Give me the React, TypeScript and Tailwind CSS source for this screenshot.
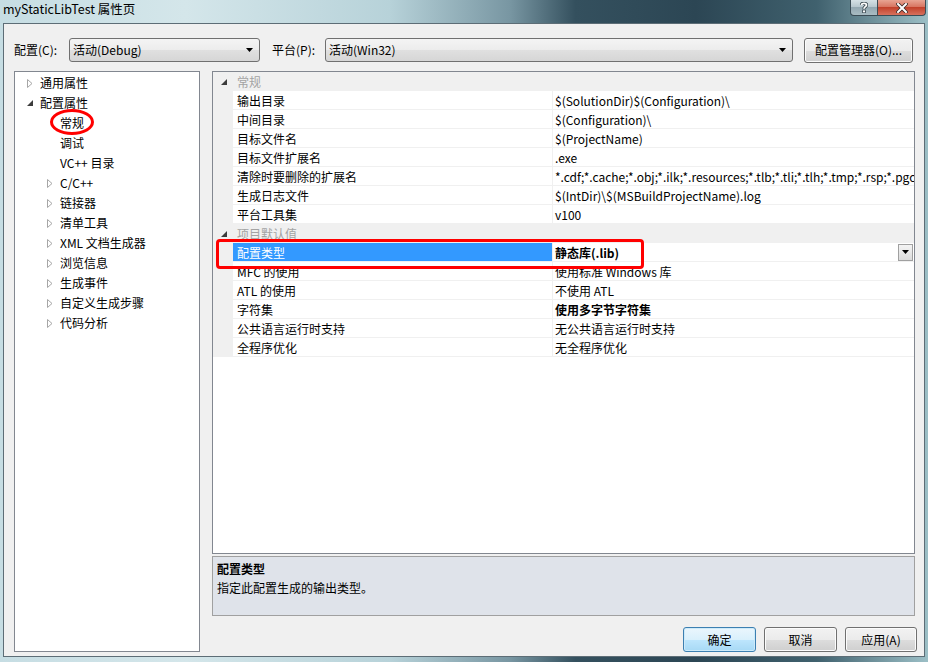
import React from 'react';

type Prop = {
  name: string;
  value: string;
  bold?: boolean;
  selected?: boolean;
};

const general: Prop[] = [
  { name: '输出目录', value: '$(SolutionDir)$(Configuration)\\' },
  { name: '中间目录', value: '$(Configuration)\\' },
  { name: '目标文件名', value: '$(ProjectName)' },
  { name: '目标文件扩展名', value: '.exe' },
  {
    name: '清除时要删除的扩展名',
    value: '*.cdf;*.cache;*.obj;*.ilk;*.resources;*.tlb;*.tli;*.tlh;*.tmp;*.rsp;*.pgc;*.pgd;*.meta;*.tlog;*.manifest;*.res;*.pch;*.exp;*.idb;*.rep;*.xdc;*.pdb;*_manifest.rc;*.bsc;*.sbr;*.xml;*.metagen;*.bi',
  },
  { name: '生成日志文件', value: '$(IntDir)\\$(MSBuildProjectName).log' },
  { name: '平台工具集', value: 'v100' },
];

const defaults: Prop[] = [
  { name: '配置类型', value: '静态库(.lib)', bold: true, selected: true },
  { name: 'MFC 的使用', value: '使用标准 Windows 库' },
  { name: 'ATL 的使用', value: '不使用 ATL' },
  { name: '字符集', value: '使用多字节字符集', bold: true },
  { name: '公共语言运行时支持', value: '无公共语言运行时支持' },
  { name: '全程序优化', value: '无全程序优化' },
];

type TreeNode = { label: string; level: 0 | 1; expander?: 'closed' | 'open' };

const tree: TreeNode[] = [
  { label: '通用属性', level: 0, expander: 'closed' },
  { label: '配置属性', level: 0, expander: 'open' },
  { label: '常规', level: 1 },
  { label: '调试', level: 1 },
  { label: 'VC++ 目录', level: 1 },
  { label: 'C/C++', level: 1, expander: 'closed' },
  { label: '链接器', level: 1, expander: 'closed' },
  { label: '清单工具', level: 1, expander: 'closed' },
  { label: 'XML 文档生成器', level: 1, expander: 'closed' },
  { label: '浏览信息', level: 1, expander: 'closed' },
  { label: '生成事件', level: 1, expander: 'closed' },
  { label: '自定义生成步骤', level: 1, expander: 'closed' },
  { label: '代码分析', level: 1, expander: 'closed' },
];

const ClosedArrow = () => (
  <svg width="6" height="9" viewBox="0 0 6 9">
    <path d="M0.5 0.5 L5 4.5 L0.5 8.5 Z" fill="#fff" stroke="#a6a6a6" strokeWidth="1" />
  </svg>
);

const OpenArrow = () => (
  <svg width="6" height="6" viewBox="0 0 6 6">
    <path d="M6 0 L6 6 L0 6 Z" fill="#3c3c3c" />
  </svg>
);

const DownArrow = () => (
  <svg width="7" height="4" viewBox="0 0 7 4">
    <path d="M0 0 H7 L3.5 4 Z" fill="#000" />
  </svg>
);

const Combo = ({ text, className }: { text: string; className: string }) => (
  <div
    className={`flex h-[24px] items-center justify-between rounded-[3px] border border-[#707070] bg-[linear-gradient(#f4f4f4,#ececec_50%,#e0e0e0_50%,#d6d6d6)] pl-[3px] pr-[6px] ${className}`}
  >
    <span>{text}</span>
    <DownArrow />
  </div>
);

const Button = ({ label, primary, className }: { label: string; primary?: boolean; className: string }) => (
  <div
    className={`flex h-[25px] items-center justify-center rounded-[3px] border ${
      primary
        ? 'border-[#3c7fb1] bg-[linear-gradient(#eaf6fd,#d9f0fc_50%,#bee6fd_50%,#a7d9f5)] shadow-[inset_0_0_0_1px_#cdeaf9]'
        : 'border-[#707070] bg-[linear-gradient(#f2f2f2,#ebebeb_50%,#dddddd_50%,#cfcfcf)] shadow-[inset_0_0_0_1px_#fcfcfc]'
    } ${className}`}
  >
    {label}
  </div>
);

const CategoryRow = ({ title }: { title: string }) => (
  <div className="flex h-[19px] items-center bg-[#f0f0f0]">
    <div className="flex w-[20px] justify-center pl-[1px]">
      <OpenArrow />
    </div>
    <span className="pl-[4px] pt-[1px] text-[#a3a3a3]">{title}</span>
  </div>
);

const PropRow = ({ p }: { p: Prop }) => (
  <div className="flex h-[19px]">
    <div className="w-[20px] shrink-0 bg-[#f0f0f0]" />
    <div
      className={`flex w-[319px] shrink-0 items-center border-b border-[#f0f0f0] pl-[4px] pt-[1px] ${
        p.selected ? 'bg-[#3399ff] text-white' : 'bg-white'
      }`}
    >
      {p.name}
    </div>
    <div className="flex min-w-0 flex-1 items-center justify-between overflow-hidden border-b border-l border-[#f0f0f0] bg-white pl-[2px]">
      <span className={`whitespace-nowrap pt-[1px] ${p.bold ? 'font-bold' : ''}`}>{p.value}</span>
      {p.selected && (
        <div className="mr-[1px] flex h-[17px] w-[15px] shrink-0 items-center justify-center border border-[#a0a0a0] bg-[linear-gradient(#f4f4f4,#dcdcdc)]">
          <DownArrow />
        </div>
      )}
    </div>
  </div>
);

export default function App() {
  return (
    <div className="relative flex h-[662px] w-[928px] flex-col overflow-hidden bg-[linear-gradient(90deg,#c6dde3_0%,#d4e6ea_20%,#b7d2d9_42%,#7896a2_55%,#34505e_62%,#2c4654_75%,#40616e_88%,#9cbfc6_100%)] font-['Noto_Sans_CJK_SC',sans-serif] text-[12px] leading-none text-black">
      {/* title bar */}
      <div className="flex h-[23px] shrink-0 items-center pl-[3px] pb-[4px] text-[12.5px]">
        myStaticLibTest 属性页
      </div>

      {/* caption buttons */}
      <div className="absolute right-[2px] top-0 flex h-[16px]">
        <div className="flex w-[28px] items-center justify-center rounded-bl-[4px] border border-t-0 border-[#3b4c55] bg-[linear-gradient(#d6e1e5,#b5c5cc_50%,#94a8b1_50%,#a9bcc3)]">
          <svg width="8" height="11" viewBox="0 0 8 11">
            <path
              d="M1.5 3 C1.5 0.8 6.5 0.8 6.5 3 C6.5 4.6 4 4.8 4 6.8"
              fill="none"
              stroke="#34444c"
              strokeWidth="3.4"
            />
            <path
              d="M1.5 3 C1.5 0.8 6.5 0.8 6.5 3 C6.5 4.6 4 4.8 4 6.8"
              fill="none"
              stroke="#fff"
              strokeWidth="1.8"
            />
            <rect x="2.6" y="8" width="2.8" height="2.8" fill="#fff" stroke="#34444c" strokeWidth="0.8" />
          </svg>
        </div>
        <div className="flex w-[48px] items-center justify-center rounded-br-[4px] border border-l-0 border-t-0 border-[#3b4c55] bg-[linear-gradient(#e8a493,#d6705c_50%,#c2412b_50%,#d7715d)]">
          <svg width="12" height="10" viewBox="0 0 12 10">
            <path d="M2 1 L10 9 M10 1 L2 9" stroke="#3a2a28" strokeWidth="3.6" strokeLinecap="square" />
            <path d="M2 1 L10 9 M10 1 L2 9" stroke="#fff" strokeWidth="2" strokeLinecap="square" />
          </svg>
        </div>
      </div>

      {/* client area */}
      <div className="mx-[3px] mb-[5px] flex flex-1 flex-col border border-[#5d6d76] bg-[#f0f0f0]">
        {/* configuration / platform selectors */}
        <div className="mt-[14px] flex h-[24px] items-center pl-[10px]">
          <span className="w-[55px]">配置(C):</span>
          <Combo text="活动(Debug)" className="w-[191px]" />
          <span className="ml-[12px] w-[53px]">平台(P):</span>
          <Combo text="活动(Win32)" className="w-[468px]" />
          <Button label="配置管理器(O)..." className="ml-[11px] h-[24px] w-[109px]" />
        </div>

        <div className="mt-[9px] flex pl-[10px]">
          {/* category tree */}
          <div className="relative h-[581px] w-[186px] border border-[#828790] bg-white pt-[1px]">
            {tree.map((n) => (
              <div key={n.label} className="flex h-[20px] items-center">
                <div className={`flex w-[10px] justify-center ${n.level === 0 ? 'ml-[10px]' : 'ml-[30px]'}`}>
                  {n.expander === 'closed' && <ClosedArrow />}
                  {n.expander === 'open' && <OpenArrow />}
                </div>
                <span className="ml-[5px]">{n.label}</span>
              </div>
            ))}
            <div className="absolute left-[35px] top-[37px] h-[26px] w-[44px] rounded-[50%] border-[3px] border-[#ff0000]" />
          </div>

          <div className="ml-[12px] flex w-[703px] flex-col">
            {/* property grid */}
            <div className="relative h-[483px] overflow-hidden border border-[#828790] bg-white">
              <CategoryRow title="常规" />
              {general.map((p) => (
                <PropRow key={p.name} p={p} />
              ))}
              <CategoryRow title="项目默认值" />
              {defaults.map((p) => (
                <PropRow key={p.name} p={p} />
              ))}
              <div className="absolute left-[3px] top-[167px] h-[30px] w-[428px] rounded-[4px] border-[3px] border-[#ff0000]" />
            </div>

            {/* description */}
            <div className="mt-[2px] h-[60px] border border-[#a0a0a0] bg-[#dfe3ea] pl-[4px] pt-[2px]">
              <div className="flex h-[19px] items-center font-bold">配置类型</div>
              <div className="flex h-[19px] items-center">指定此配置生成的输出类型。</div>
            </div>

            <div className="mr-[-2px] mt-[11px] flex justify-end gap-[8px]">
              <Button label="确定" primary className="w-[73px]" />
              <Button label="取消" className="w-[73px]" />
              <Button label="应用(A)" className="w-[72px]" />
            </div>
          </div>
        </div>
      </div>
    </div>
  );
}
